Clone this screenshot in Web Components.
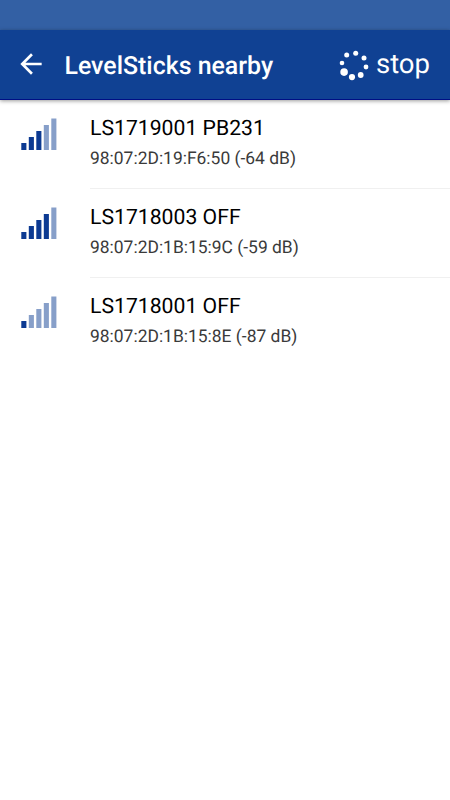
<!DOCTYPE html>
<html lang="en">
<head>
<meta charset="utf-8">
<title>LevelSticks nearby</title>
<style>
  body{
    margin: 0;
    background-color: #fff;
    font-family: Roboto, sans-serif;
    text-rendering: geometricPrecision;
  }
</style>
</head>
<body>
<app-screen>
  <app-header slot="header" title-text="LevelSticks nearby">
    <scan-button slot="action">stop</scan-button>
  </app-header>
  <device-row level="3"><span>LS1719001 PB231</span><span slot="info">98:07:2D:19:F6:50 (-64 dB)</span></device-row>
  <device-row level="4"><span>LS1718003 OFF</span><span slot="info">98:07:2D:1B:15:9C (-59 dB)</span></device-row>
  <device-row level="1" last><span>LS1718001 OFF</span><span slot="info">98:07:2D:1B:15:8E (-87 dB)</span></device-row>
</app-screen>

<script>
class AppScreen extends HTMLElement{
  constructor(){
    super()
    this.shadow = this.attachShadow({mode: 'open'})
  }

  connectedCallback(){
    this.shadow.innerHTML = `
      <style>
        :host{
          display: flex;
          flex-direction: column;
          height: 800px;
          overflow: hidden;
        }
        #status{
          flex: none;
          height: 30px;
          background-color: #3360a4;
        }
      </style>
      <div id="status"></div>
      <slot name="header"></slot>
      <slot></slot>
    `
  }
}

class AppHeader extends HTMLElement{
  constructor(){
    super()
    this.shadow = this.attachShadow({mode: 'open'})
  }

  connectedCallback(){
    this.shadow.innerHTML = `
      <style>
        :host{
          display: flex;
          flex: none;
          align-items: center;
          box-sizing: border-box;
          height: 70px;
          padding: 0 20px 0 15px;
          background-color: #104193;
          border-bottom: 1px solid #000f85;
          box-shadow: 0 1px 4px rgba(0, 0, 0, .4);
          color: #fff;
        }
        svg{
          flex: none;
          width: 32px;
          height: 32px;
          margin-bottom: 1px;
        }
        h1{
          flex: 1;
          margin: 4px 0 0 17.5px;
          font-size: 24.9px;
          line-height: 30px;
          font-weight: 500;
          white-space: nowrap;
        }
      </style>
      <svg viewBox="0 0 24 24" fill="#fff"><path d="M20 11H7.83l5.59-5.59L12 4l-8 8 8 8 1.41-1.41L7.83 13H20v-2z"/></svg>
      <h1>${this.getAttribute('title-text')}</h1>
      <slot name="action"></slot>
    `
  }
}

class ScanButton extends HTMLElement{
  constructor(){
    super()
    this.shadow = this.attachShadow({mode: 'open'})
  }

  connectedCallback(){
    this.shadow.innerHTML = `
      <style>
        :host{
          display: flex;
          align-items: center;
          gap: 6px;
          margin-bottom: 2px;
          font-size: 27.5px;
          line-height: 32px;
        }
        svg{
          width: 32px;
          height: 32px;
          margin-top: 2px;
        }
      </style>
      <svg viewBox="0 0 32 32" fill="#fff">
        <circle cx="17.7" cy="4.3" r="2.5"/>
        <circle cx="26" cy="9" r="2.5"/>
        <circle cx="28" cy="18" r="2.4"/>
        <circle cx="22.7" cy="26" r="2.9"/>
        <circle cx="14" cy="28.1" r="3.1"/>
        <circle cx="6.1" cy="23.1" r="3.8"/>
        <circle cx="4" cy="14" r="2.3"/>
        <circle cx="8.7" cy="6.1" r="2.5"/>
      </svg>
      <slot></slot>
    `
  }
}

class SignalBars extends HTMLElement{
  constructor(){
    super()
    this.shadow = this.attachShadow({mode: 'open'})
  }

  connectedCallback(){
    const level = Number(this.getAttribute('level'))
    const heights = [7, 13, 19, 25, 31.5]
    const bars = heights.map((h, i) => `<rect class="${i < level ? 'on' : ''}" x="${0.3 + i * 7.5}" y="${32 - h}" width="5.1" height="${h}"/>`).join('')
    this.shadow.innerHTML = `
      <style>
        :host{
          display: block;
          width: 36px;
          height: 32px;
        }
        svg{
          display: block;
        }
        rect{
          fill: #879fc9;
        }
        .on{
          fill: #0c3a92;
        }
      </style>
      <svg width="36" height="32" viewBox="0 0 36 32">${bars}</svg>
    `
  }
}

class DeviceRow extends HTMLElement{
  constructor(){
    super()
    this.shadow = this.attachShadow({mode: 'open'})
  }

  connectedCallback(){
    this.shadow.innerHTML = `
      <style>
        :host{
          display: flex;
          flex: none;
          height: 88.8px;
          padding-left: 21px;
        }
        signal-bars{
          flex: none;
          margin: 18px 33px 0 0;
        }
        #text{
          flex: 1;
          box-sizing: border-box;
          padding-top: 15px;
          border-bottom: 1px solid #f0f0f0;
          white-space: nowrap;
        }
        :host([last]) #text{
          border-bottom: none;
        }
        #name{
          font-size: 21.2px;
          line-height: 28px;
          color: #000;
        }
        #info{
          margin-top: 4px;
          font-size: 17.45px;
          line-height: 24px;
          color: #3a3a3a;
        }
      </style>
      <signal-bars level="${this.getAttribute('level')}"></signal-bars>
      <div id="text">
        <div id="name"><slot></slot></div>
        <div id="info"><slot name="info"></slot></div>
      </div>
    `
  }
}

customElements.define('app-screen', AppScreen)
customElements.define('app-header', AppHeader)
customElements.define('scan-button', ScanButton)
customElements.define('signal-bars', SignalBars)
customElements.define('device-row', DeviceRow)
</script>
</body>
</html>
